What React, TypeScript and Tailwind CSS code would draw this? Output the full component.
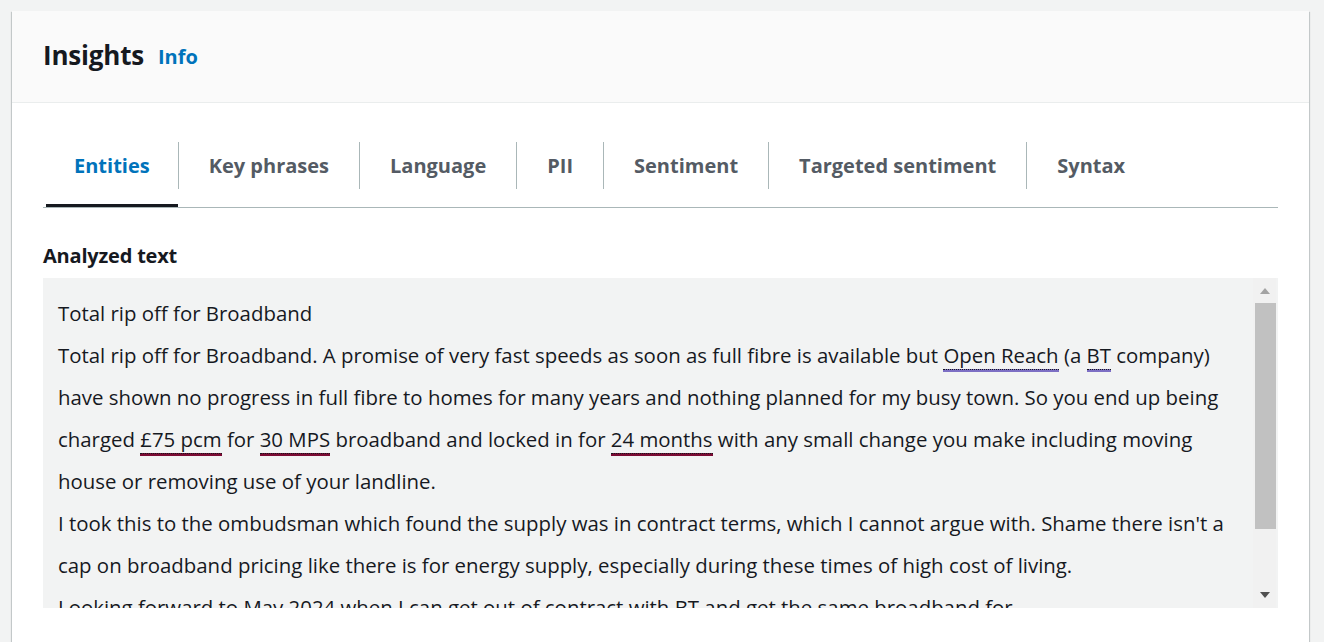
import React from "react";

const tabs = ["Entities", "Key phrases", "Language", "PII", "Sentiment", "Targeted sentiment", "Syntax"];

function Entity({ children, tone }: { children: React.ReactNode; tone: "org" | "qty" }) {
  // entity highlight: solid coloured bar with a dotted line on top
  const bar = tone === "org" ? "border-[#7d6fc4]" : "border-[#7a0a33]";
  return (
    <span className={`border-b-[3px] ${bar}`}>
      <span className="border-b border-dotted border-[#16191f]">{children}</span>
    </span>
  );
}

function Arrow({ up, color }: { up?: boolean; color: string }) {
  return (
    <svg width="10" height="6" viewBox="0 0 10 6">
      <path d={up ? "M0 6 L5 0 L10 6 Z" : "M0 0 L10 0 L5 6 Z"} fill={color} />
    </svg>
  );
}

export default function App() {
  const lines: React.ReactNode[] = [
    "Total rip off for Broadband",
    <>
      Total rip off for Broadband. A promise of very fast speeds as soon as full fibre is available but{" "}
      <Entity tone="org">Open Reach</Entity> (a <Entity tone="org">BT</Entity> company)
    </>,
    "have shown no progress in full fibre to homes for many years and nothing planned for my busy town. So you end up being",
    <>
      charged <Entity tone="qty">£75 pcm</Entity> for <Entity tone="qty">30 MPS</Entity> broadband and locked in for{" "}
      <Entity tone="qty">24 months</Entity> with any small change you make including moving
    </>,
    "house or removing use of your landline.",
    "I took this to the ombudsman which found the supply was in contract terms, which I cannot argue with. Shame there isn't a",
    "cap on broadband pricing like there is for energy supply, especially during these times of high cost of living.",
    "Looking forward to May 2024 when I can get out of contract with BT and get the same broadband for",
  ];

  return (
    <div className="h-screen overflow-hidden bg-[#f2f3f3] pl-3 pr-[15px] pt-[11px] font-['Open_Sans',sans-serif] text-[#16191f]">
      <div className="bg-white h-full shadow-[0_1px_1px_0_rgba(0,28,36,0.3),1px_1px_1px_0_rgba(0,28,36,0.15),-1px_1px_1px_0_rgba(0,28,36,0.15)]">
        {/* Header */}
        <div className="h-[92px] bg-[#fafafa] border-b border-[#eaeded] flex items-center gap-[14px] pl-[31px] pb-[2px]">
          <h2 className="text-[26px] font-bold tracking-[-0.2px]">Insights</h2>
          <a className="text-[20px] font-bold text-[#0073bb] mt-[2px]">Info</a>
        </div>

        <div className="px-[31px]">
          {/* Tabs */}
          <div className="mt-[22px] flex items-start border-b border-[#aab7b8]">
            {tabs.map((t, i) => (
              <div key={t} className="flex items-start">
                {i > 0 && <div className="w-px h-[47px] mt-[17px] bg-[#aab7b8]" />}
                <button
                  className={`pt-[17px] pb-[15px] border-b-[3px] ${
                    i === 0 ? "ml-[3px] px-[28px] border-[#16191f] text-[#0073bb]" : "px-[30px] border-transparent text-[#545b64]"
                  }`}
                >
                  <span className="h-[47px] flex items-center text-[20px] font-bold">{t}</span>
                </button>
              </div>
            ))}
          </div>

          {/* Analyzed text */}
          <h3 className="mt-[36px] text-[20px] leading-[24px] font-bold tracking-[-0.2px]">Analyzed text</h3>
          <div className="mt-[10px] h-[330px] bg-[#f2f3f3] flex">
            <div className="flex-1 overflow-hidden pl-[15px] pt-[14px] text-[20.4px] leading-[42px]">
              {lines.map((l, i) => (
                <div key={i} className="whitespace-nowrap">
                  {l}
                </div>
              ))}
            </div>
            <div className="w-[23px] mr-[2px] bg-[#f1f1f1] flex flex-col">
              <div className="h-[25px] flex items-center justify-center">
                <Arrow up color="#a3a3a3" />
              </div>
              <div className="ml-[2px] h-[226px] bg-[#c1c1c1]" />
              <div className="flex-1" />
              <div className="h-[25px] flex items-center justify-center pb-[2px]">
                <Arrow color="#505050" />
              </div>
            </div>
          </div>
        </div>
      </div>
    </div>
  );
}
